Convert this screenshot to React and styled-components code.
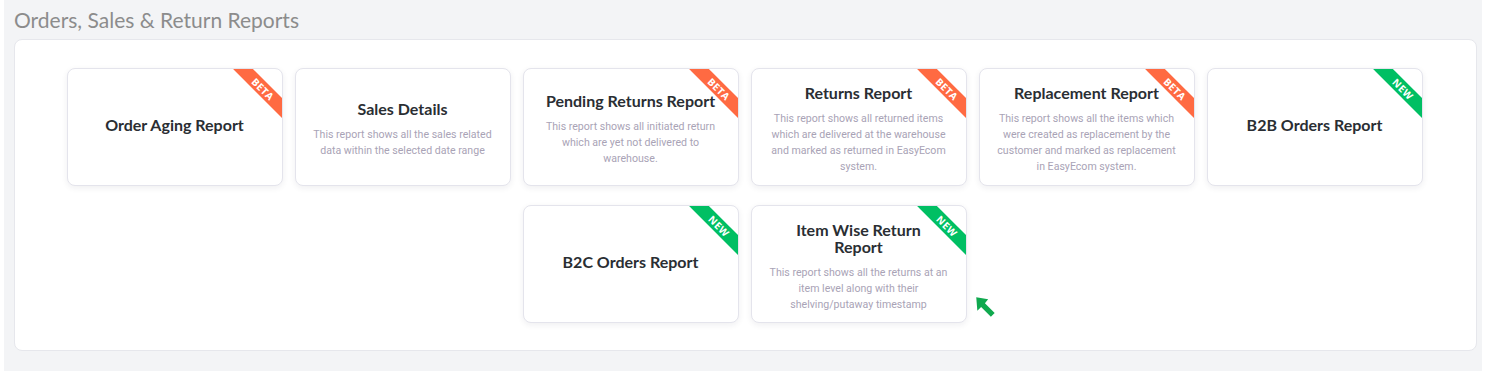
import React from 'react';
import styled, { createGlobalStyle } from 'styled-components';

const GlobalStyle = createGlobalStyle`
    body {
        margin: 0;
        background: #ffffff;
        font-family: "Lato", "Open Sans", sans-serif;
    }
`;

const reports = [
    { title: 'Order Aging Report', tag: 'beta' },
    { title: 'Sales Details', desc: 'This report shows all the sales related data within the selected date range' },
    { title: 'Pending Returns Report', tag: 'beta', desc: 'This report shows all initiated return which are yet not delivered to warehouse.' },
    { title: 'Returns Report', tag: 'beta', desc: 'This report shows all returned items which are delivered at the warehouse and marked as returned in EasyEcom system.' },
    { title: 'Replacement Report', tag: 'beta', desc: 'This report shows all the items which were created as replacement by the customer and marked as replacement in EasyEcom system.' },
    { title: 'B2B Orders Report', tag: 'new' },
    { title: 'B2C Orders Report', tag: 'new' },
    { title: 'Item Wise Return Report', tag: 'new', arrow: true, desc: 'This report shows all the returns at an item level along with their shelving/putaway timestamp' },
];

const App = () => {
    return (
        <>
            <GlobalStyle />
            <Page>
                <Heading>Orders, Sales &amp; Return Reports</Heading>
                <Panel>
                    <Grid>
                        {reports.map((r) => (
                            <Slot key={r.title}>
                                <Card $hasDesc={!!r.desc}>
                                    {r.tag && <Ribbon $tag={r.tag}>{r.tag}</Ribbon>}
                                    <Title $narrow={r.arrow} $alone={!r.desc}>{r.title}</Title>
                                    {r.desc && <Desc>{r.desc}</Desc>}
                                </Card>
                                {r.arrow && (
                                    <Pointer>
                                        <svg width="24" height="26" viewBox="0 0 22 24">
                                            <path d="M2 2 L13 4 L10 7.5 L19 16.5 L15.5 20 L6.5 11 L3 14.5 Z" fill="#10a94f" />
                                        </svg>
                                    </Pointer>
                                )}
                            </Slot>
                        ))}
                    </Grid>
                </Panel>
            </Page>
        </>
    );
};

const Page = styled.div`
    margin: 0 3px 0 4px;
    height: 371px;
    background: #f3f4f6;
    padding: 8px 5px 0 10px;
    box-sizing: border-box;
`;

const Heading = styled.h1`
    margin: 0 0 8px 0;
    font-size: 21px;
    font-weight: 400;
    line-height: 23px;
    color: #8c8c8c;
`;

const Panel = styled.div`
    background: #ffffff;
    border: 1px solid #e6e7ec;
    border-radius: 8px;
    padding: 28px 0 27px;
`;

const Grid = styled.div`
    display: flex;
    flex-wrap: wrap;
    justify-content: center;
    column-gap: 12px;
    row-gap: 19px;
    padding-right: 2px;
`;

const Slot = styled.div`
    position: relative;
`;

const Card = styled.div`
    position: relative;
    width: 216px;
    height: 118px;
    box-sizing: border-box;
    background: #ffffff;
    border: 1px solid #e4e4ec;
    border-radius: 8px;
    box-shadow: 0 2px 6px rgba(30, 30, 60, 0.07);
    overflow: hidden;
    display: flex;
    flex-direction: column;
    justify-content: center;
    align-items: center;
    padding: ${(p) => (p.$hasDesc ? '5px 14px 0' : '0 14px')};
    text-align: center;
`;

const Ribbon = styled.div`
    position: absolute;
    top: 13px;
    right: -21px;
    width: 80px;
    height: 14px;
    line-height: 14px;
    transform: rotate(45deg);
    background: ${(p) => (p.$tag === 'new' ? '#00bf63' : '#ff6a42')};
    color: #ffffff;
    font-family: "Open Sans", sans-serif;
    font-size: 10px;
    font-weight: 700;
    text-transform: uppercase;
    letter-spacing: 0.4px;
    text-align: center;
`;

const Title = styled.div`
    font-size: 16px;
    font-weight: 700;
    line-height: 17px;
    color: #2a2e33;
    max-width: ${(p) => (p.$narrow ? '150px' : 'none')};
    margin-bottom: ${(p) => (p.$alone ? '6px' : '0')};
`;

const Desc = styled.div`
    margin-top: 10px;
    font-family: "Roboto", sans-serif;
    font-size: 10.6px;
    line-height: 16px;
    color: #a9a3b6;
`;

const Pointer = styled.div`
    position: absolute;
    left: calc(100% + 7px);
    top: 90px;
`;

export default App;
